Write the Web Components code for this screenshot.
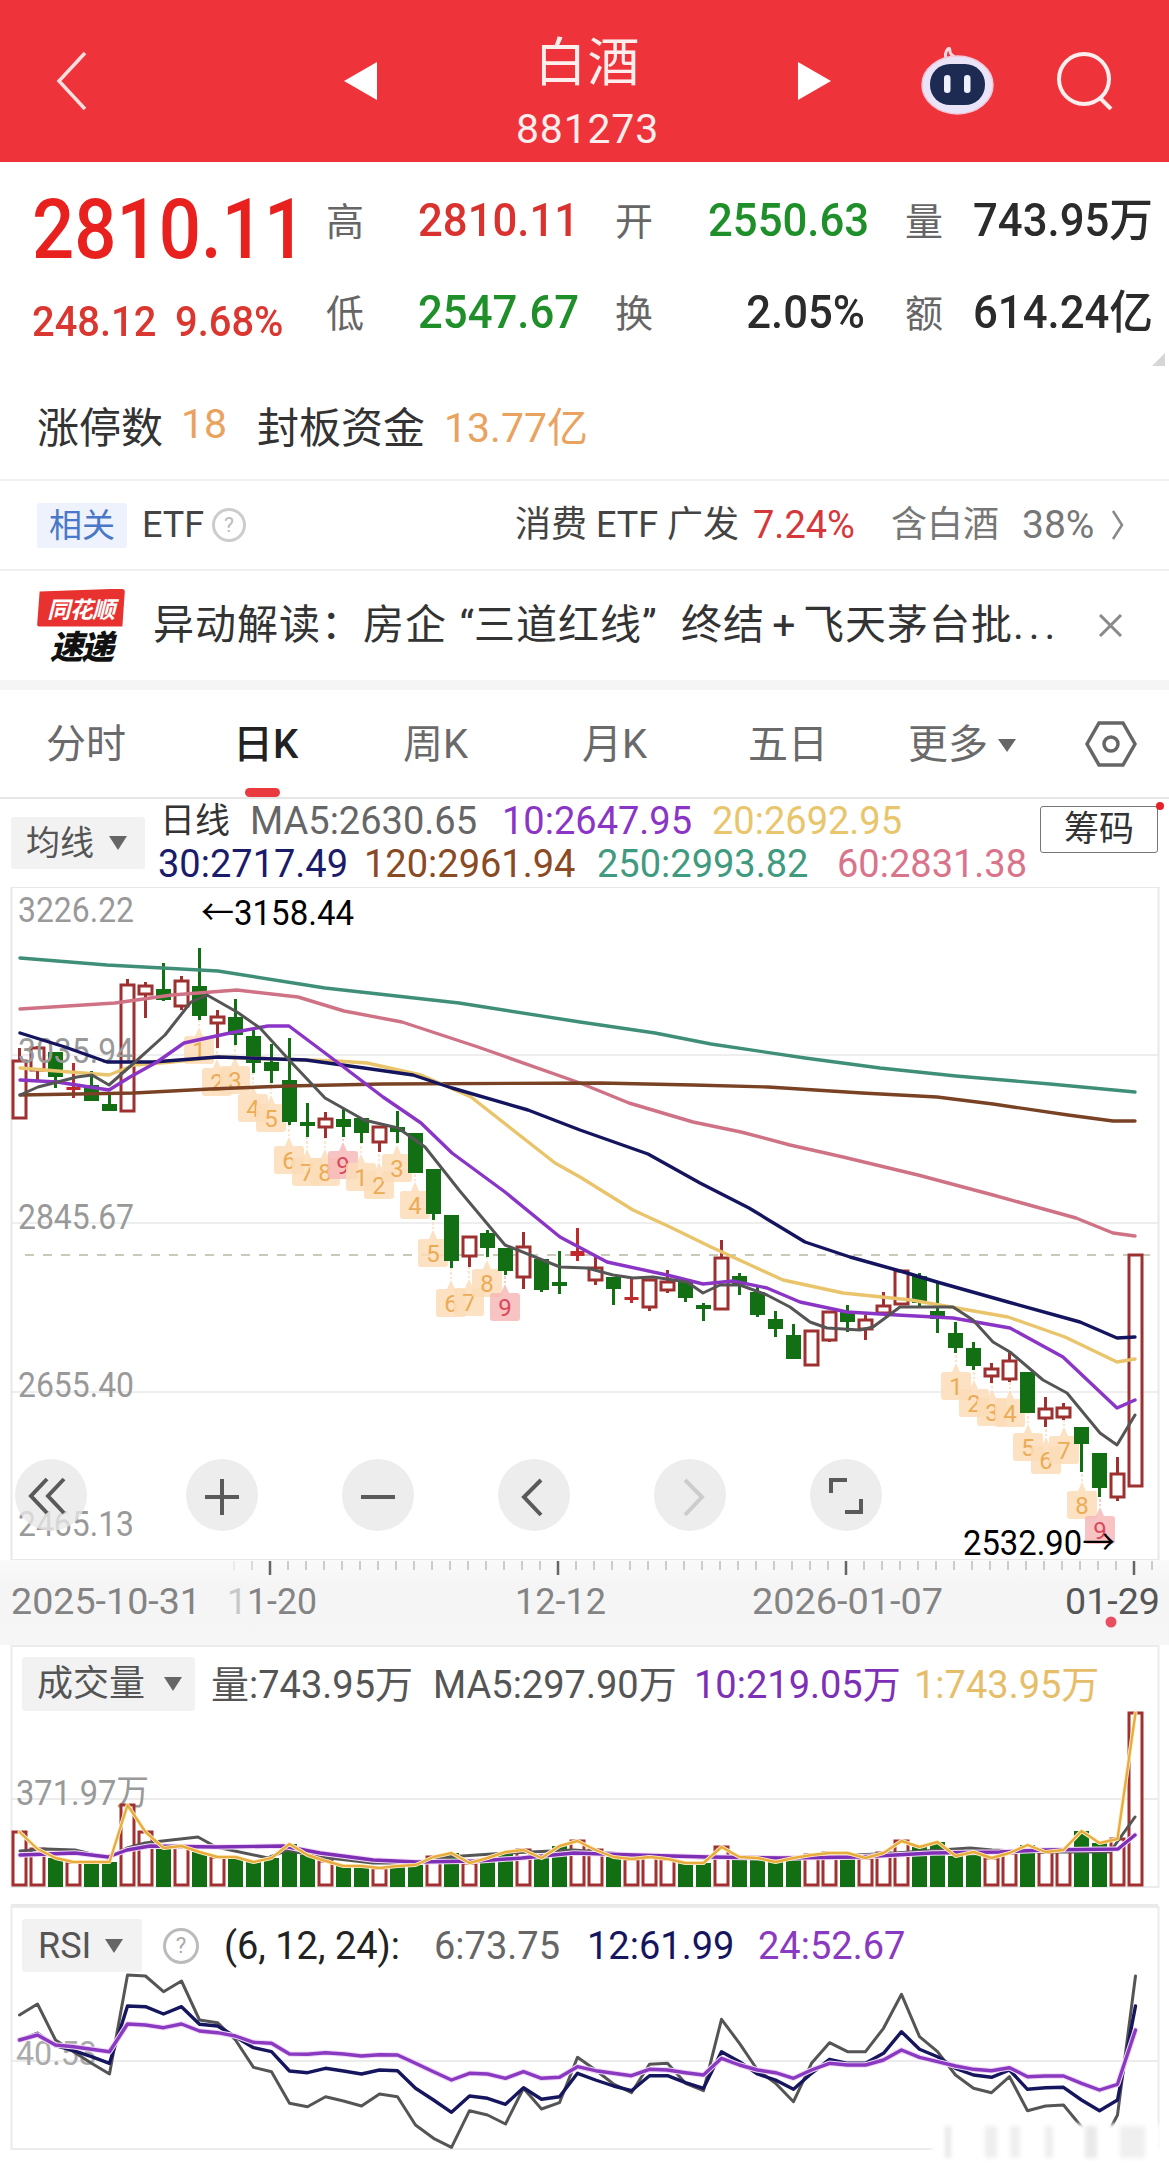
<!DOCTYPE html>
<html lang="zh"><head><meta charset="utf-8"><title>白酒</title>
<style>
html,body{margin:0;padding:0;background:#fff}
body{width:1169px;height:2172px;overflow:hidden;display:flex;flex-direction:column;font-family:Roboto,"Noto Sans CJK SC",sans-serif}
</style></head>
<body>
<x-header></x-header>
<x-quote></x-quote>
<x-etf></x-etf>
<x-news></x-news>
<x-tabs></x-tabs>
<x-legend></x-legend>
<x-kline></x-kline>
<x-axis></x-axis>
<x-volume></x-volume>
<x-rsi></x-rsi>
<script>
const FONT='Roboto,"Noto Sans CJK SC",sans-serif';
function def(name,html,init){
  customElements.define(name,class extends HTMLElement{
    constructor(){super();this.attachShadow({mode:'open'}).innerHTML=typeof html==='function'?html(this):html;}
    connectedCallback(){if(init)init(this);}
  });
}
const X=i=>19.5+18*i;
const line=(pts,c,w=3.4,extra='')=>`<polyline points="${pts.map(p=>p.join(',')).join(' ')}" fill="none" stroke="${c}" stroke-width="${w}" stroke-linejoin="round" stroke-linecap="round" ${extra}/>`;
const T=(s,x,y,len,fs,c,w=400)=>`<text x="${x}" y="${y}" textLength="${len}" lengthAdjust="spacingAndGlyphs" font-size="${fs}" fill="${c}" font-weight="${w}" font-family='${FONT}'>${s}</text>`;

def('x-select',`<style>
:host{display:inline-flex;align-items:center;background:#f2f2f2;border-radius:3px;box-sizing:border-box;color:#555;font:400 var(--fs,35px)/1 ${FONT};gap:var(--g,17px);padding-left:var(--p,15px)}
i{display:block;width:0;height:0;border-left:9px solid transparent;border-right:9px solid transparent;border-top:14px solid #666}
</style><slot></slot><i></i>`);

def('x-help',`<style>:host{display:inline-flex;align-items:center;justify-content:center;box-sizing:border-box;width:var(--s,34px);height:var(--s,34px);border:3px solid #ccc;border-radius:50%;color:#bbb;font:400 calc(var(--s,34px)*.62)/1 ${FONT}}</style>?`);

def('x-chart-btn',`<style>:host{display:block;flex:none;width:72px;height:72px;border-radius:50%;background:rgba(232,232,232,.78)}svg{display:block}</style>
<svg width="72" height="72" viewBox="0 0 72 72" fill="none" stroke="var(--c,#5a5a5a)" stroke-width="4"><path d=""/></svg>`,
el=>{el.shadowRoot.querySelector('path').setAttribute('d',el.getAttribute('d'))});

def('x-header',`<style>
:host{display:grid;flex:none;height:162px;background:#ee343a;box-sizing:border-box;padding-left:56px;grid-template-columns:288px 33px 421px 33px 90px 73px 63px 56px;align-items:center;color:#fdeeee;font-family:${FONT}}
svg{display:block}
.c{display:flex;flex-direction:column;align-items:center;justify-content:flex-start;height:162px;padding-top:36px;box-sizing:border-box}
.t{font-size:52px;line-height:56px;font-weight:400;letter-spacing:1px}
.n{font-size:41px;line-height:40px;margin-top:17px;font-weight:400;letter-spacing:.8px}
</style>
<svg width="32" height="60" viewBox="0 0 32 60"><path d="M29 2 3 30l26 28" fill="none" stroke="#fbdede" stroke-width="3.5"/></svg>
<svg width="33" height="38" viewBox="0 0 33 38"><path d="M33 0V38L0 19Z" fill="#fff"/></svg>
<div class="c"><div class="t">白酒</div><div class="n">881273</div></div>
<svg width="33" height="38" viewBox="0 0 33 38"><path d="M0 0V38L33 19Z" fill="#fff"/></svg>
<span></span>
<svg width="73" height="68" viewBox="0 0 73 68"><path d="M27 14c-4-3-3-10 1-13 2 2 0 4 2 6 2 2 6 4 6 8" fill="none" stroke="#f8d9e2" stroke-width="3"/><ellipse cx="36.500" cy="38" rx="35.500" ry="29" fill="#e9e4f8" stroke="#f3c6d8" stroke-width="1.500"/><rect x="9" y="17" width="55" height="41" rx="20" fill="#1d2a52"/><rect x="23" y="28" width="6.500" height="18" rx="3.200" fill="#eef1ff"/><rect x="43" y="28" width="6.500" height="18" rx="3.200" fill="#eef1ff"/></svg>
<span></span>
<svg width="56" height="58" viewBox="0 0 56 58"><circle cx="27" cy="27" r="25" fill="none" stroke="#fdeeee" stroke-width="4"/><path d="M42 45 54 57" stroke="#fdeeee" stroke-width="4"/></svg>`);

def('x-quote',`<style>
:host{display:flex;flex-direction:column;flex:none;height:319px;box-sizing:border-box;border-bottom:2px solid #f0f0f0;position:relative;font-family:${FONT}}
.top{display:flex;height:230px;flex:none;padding-left:32px}
.l{width:294px;flex:none;color:#e32b2b}
.big{font-size:84px;font-weight:500;line-height:70px;margin-top:33px;color:#e8211f;transform:scaleX(.885);transform-origin:left;white-space:nowrap}
.sub{font-size:42px;font-weight:500;line-height:44px;margin-top:35px;color:#d9372f;display:flex;white-space:nowrap}
.sub span{display:block;transform:scaleX(.95);transform-origin:left}
.sub span:first-child{width:143px}
.g{display:grid;grid-template-columns:92px 197px 93px 157px 40px 68px 1fr;grid-auto-rows:46px;row-gap:46px;padding-top:35px;align-items:center;white-space:nowrap}
.k{font-size:38px;font-weight:400;color:#666;margin-bottom:3px}
.v{font-size:46px;font-weight:500;transform:scaleX(.95);transform-origin:left;color:#2b2b2b;line-height:46px}
.r{color:#d9322f}.gr{color:#1f8f2a}.right{text-align:right;transform-origin:right}
.row{display:flex;align-items:center;height:50px;margin-top:7px;padding-left:37px;font-size:42px;color:#333;font-weight:400;white-space:nowrap}
.o{color:#e9a35f;font-size:41px}
.tri{position:absolute;left:1152px;top:191px;width:0;height:0;border-left:13px solid transparent;border-bottom:13px solid #d6d6d6}
</style>
<div class="top"><div class="l"><div class="big">2810.11</div><div class="sub"><span>248.12</span><span>9.68%</span></div></div>
<div class="g">
<span class="k">高</span><span class="v r">2810.11</span><span class="k">开</span><span class="v gr">2550.63</span><span></span><span class="k">量</span><span class="v">743.95万</span>
<span class="k">低</span><span class="v gr">2547.67</span><span class="k">换</span><span class="v right">2.05%</span><span></span><span class="k">额</span><span class="v">614.24亿</span>
</div></div>
<div class="row"><span>涨停数</span><span class="o" style="margin-left:18px;width:43px">18</span><span style="margin-left:33px">封板资金</span><span class="o" style="margin-left:19px">13.77亿</span></div>
<div class="tri"></div>`);

def('x-etf',`<style>
:host{display:flex;flex:none;height:90px;box-sizing:border-box;border-bottom:2px solid #f0f0f0;align-items:center;padding-left:37px;font:400 36px/1 ${FONT};color:#444;white-space:nowrap}
.tag{width:90px;height:45px;background:#edf2fc;border-radius:3px;color:#4a78c8;display:flex;align-items:center;justify-content:center;font-size:33px;font-weight:400}
.e{margin-left:15px;width:70px}
.m{margin-left:269px;display:flex;align-items:center;width:238px;font-weight:400;font-size:36px}
.p{color:#d6373a;width:138px;font-size:38px}
.g{color:#777;font-size:36px;font-weight:400}
svg{margin-left:15px}
</style>
<span class="tag">相关</span><span class="e">ETF</span><x-help></x-help>
<span class="m">消费 ETF 广发</span><span class="p">7.24%</span><span class="g" style="width:131px">含白酒</span><span class="g" style="width:74px;font-size:39px">38%</span>
<svg width="13" height="32" viewBox="0 0 13 32"><path d="M2 2 11 16 2 30" fill="none" stroke="#888" stroke-width="2.500"/></svg>`);

def('x-news',`<style>
:host{display:flex;flex:none;height:119px;box-sizing:border-box;border-bottom:10px solid #f5f5f5;align-items:center;padding-left:37px;white-space:nowrap;color:#333;font:400 41px/1 ${FONT}}
.logo{width:88px;height:74px;flex:none;display:flex;flex-direction:column;align-items:center}
.a{width:88px;height:38px;background:#e8322f;color:#fff;font:italic 700 23px/38px "Noto Sans CJK SC",sans-serif;text-align:center;border-radius:3px;clip-path:polygon(3% 8%,100% 0,97% 100%,0 100%);letter-spacing:-.5px}
.b{font:italic 900 33px/36px "Noto Sans CJK SC",sans-serif;color:#111;letter-spacing:-2px}
.t{margin-left:28px;width:915px;flex:none;letter-spacing:1px}
.t span{display:inline-block;text-align:center;letter-spacing:0}
svg{margin-left:30px}
</style>
<div class="logo"><div class="a">同花顺</div><div class="b">速递</div></div>
<div class="t">异动解读：房企<span style="width:27px;text-align:right">“</span>三道红线<span style="width:39px;text-align:left">”</span>终结<span style="width:38px">+</span>飞天茅台批<span style="letter-spacing:5px;width:45px">...</span></div>
<svg width="25" height="23" viewBox="0 0 25 23"><path d="M2 1 23 22M23 1 2 22" stroke="#8a8a8a" stroke-width="3"/></svg>`);

def('x-tabs',`<style>
:host{display:grid;flex:none;height:109px;box-sizing:border-box;border-bottom:2px solid #e6e6e6;grid-template-columns:187px 170px 179px 166px 160px 177px 60px;padding-left:46px;align-items:center;font:400 40px/1 ${FONT};color:#6a6a6a;position:relative;white-space:nowrap}
b{color:#222;font-weight:500}
span{padding-top:3px}
i{position:absolute;left:245px;top:98px;width:35px;height:9px;border-radius:5px;background:#e93b3f}
.m{display:flex;align-items:center;gap:10px}
.m u{display:block;width:0;height:0;border-left:9px solid transparent;border-right:9px solid transparent;border-top:13px solid #666}
</style>
<span>分时</span><span><b>日K</b></span><span>周K</span><span>月K</span><span>五日</span><span class="m">更多<u></u></span>
<svg width="52" height="46" viewBox="0 0 52 46"><path d="M14 2H38L50 23 38 44H14L2 23Z" fill="none" stroke="#666" stroke-width="3.500"/><circle cx="26" cy="23" r="7" fill="none" stroke="#666" stroke-width="3.500"/></svg><i></i>`);

def('x-legend',`<style>
:host{display:flex;flex:none;height:88px;box-sizing:border-box;padding:1px 11px 0;position:relative;font:400 38px/43px ${FONT};white-space:nowrap;color:#666}
x-select{width:134px;height:52px;margin-top:17px;flex:none;--fs:34px;--g:15px}
.c{margin-left:13px;width:882px;flex:none}
.row{display:flex;height:43px}.row span{display:block;flex:none}
.bx{box-sizing:border-box;width:118px;height:47px;margin-top:6px;border:1.500px solid #777;border-radius:3px;display:flex;align-items:center;justify-content:center;font-size:35px;font-weight:400;color:#333;line-height:1;flex:none;margin-left:0}
.dot{position:absolute;left:1156px;top:3px;width:8px;height:8px;border-radius:50%;background:#e8202a}
</style>
<x-select>均线</x-select>
<div class="c">
<div class="row"><span style="width:90px;margin-left:2px;color:#333;font-size:35px;font-weight:400">日线</span><span style="width:252px">MA5:2630.65</span><span style="width:210px;color:#8a35c5">10:2647.95</span><span style="color:#e9c56c">20:2692.95</span></div>
<div class="row"><span style="width:206px;color:#1b1b6b">30:2717.49</span><span style="width:233px;color:#8a4a24">120:2961.94</span><span style="width:240px;color:#3f9a80">250:2993.82</span><span style="color:#d9748a">60:2831.38</span></div>
</div>
<div class="bx">筹码</div><i class="dot"></i>`);

const candles=[
['r',1048,1118,1061,1118],['r',1046,1080,1048,1070],['g',1052,1088,1052,1077],['f',1063,1098,1087,1090],['g',1071,1101,1085,1101],['g',1093,1111,1104,1111],['r',979,1112,985,1111],['r',982,1018,986,994],['g',963,1001,989,1000],['r',976,1010,981,1006],
['g',948,1020,986,1016],['r',1010,1048,1017,1023],['g',999,1045,1017,1035],['g',1030,1073,1036,1063],['g',1044,1083,1062,1071],['g',1038,1125,1080,1122],['g',1103,1137,1122,1126],['r',1112,1138,1119,1127],['g',1109,1137,1119,1127],['g',1118,1143,1118,1133],
['r',1127,1152,1127,1142],['g',1111,1143,1127,1132],['g',1133,1173,1133,1173],['g',1169,1220,1169,1214],['g',1215,1268,1215,1261],['r',1237,1267,1237,1256],['g',1230,1257,1233,1248],['g',1248,1275,1248,1271],['r',1232,1289,1247,1277],['g',1259,1292,1259,1290],
['g',1251,1294,1282,1286],['f',1228,1261,1251,1256],['r',1257,1285,1268,1280],['g',1277,1305,1277,1289],['f',1279,1303,1297,1300],['r',1280,1311,1280,1307],['r',1270,1293,1282,1290],['g',1281,1302,1281,1298],['g',1303,1321,1305,1309],['r',1240,1309,1258,1309],
['g',1273,1295,1276,1285],['g',1285,1317,1292,1315],['g',1311,1337,1319,1329],['g',1324,1359,1335,1359],['r',1331,1365,1331,1365],['r',1312,1342,1312,1340],['g',1305,1332,1312,1322],['r',1315,1340,1320,1329],['r',1292,1315,1306,1313],['r',1271,1304,1271,1304],
['g',1273,1308,1276,1303],['g',1283,1333,1311,1319],['g',1322,1353,1333,1348],['g',1342,1370,1348,1366],['r',1363,1383,1369,1376],['r',1352,1382,1361,1379],['g',1372,1413,1372,1413],['r',1397,1427,1409,1418],['r',1403,1420,1408,1417],['g',1427,1472,1427,1444],
['g',1453,1497,1453,1488],['r',1457,1501,1474,1497],['r',1255,1487,1255,1486]];
const tags=[[199,1050,1],[217,1082,2],[235,1080,3],[253,1108,4],[271,1118,5],[289,1160,6],[307,1172,7],[325,1172,8],[343,1165,9,1],[361,1177,1],[379,1185,2],[397,1168,3],[415,1205,4],[433,1253,5],[451,1303,6],[469,1302,7],[487,1283,8],[505,1307,9,1],[956,1386,1],[974,1403,2],[992,1412,3],[1010,1413,4],[1028,1447,5],[1046,1460,6],[1064,1450,7],[1082,1505,8],[1100,1530,9,1]];
const MA={
g250:[[20,958],[107,965],[218,971],[325,988],[459,1003],[580,1022],[655,1033],[711,1044],[805,1058],[880,1068],[956,1076],[1050,1084],[1135,1092]],
p60:[[20,1009],[115,1003],[172,995],[237,990],[298,997],[344,1011],[402,1022],[478,1047],[580,1083],[629,1103],[693,1122],[741,1132],[790,1145],[843,1157],[918,1175],[993,1195],[1076,1218],[1113,1233],[1135,1236]],
b120:[[20,1095],[134,1093],[210,1089],[287,1086],[383,1084],[600,1083],[693,1085],[768,1087],[862,1093],[937,1097],[993,1104],[1068,1115],[1113,1121],[1135,1121]],
y20:[[20,1068],[57,1071],[109,1075],[134,1065],[172,1062],[218,1057],[337,1061],[367,1063],[421,1075],[471,1097],[555,1163],[580,1177],[633,1210],[670,1227],[711,1247],[783,1280],[843,1293],[911,1300],[1008,1317],[1065,1337],[1117,1362],[1135,1359]],
n30:[[20,1033],[65,1047],[107,1062],[153,1062],[218,1057],[306,1060],[364,1068],[413,1075],[452,1088],[528,1110],[580,1130],[648,1154],[700,1183],[749,1208],[805,1242],[850,1257],[907,1273],[937,1282],[1008,1302],[1080,1322],[1117,1338],[1135,1337]],
v10:[[20,1080],[57,1082],[109,1090],[130,1077],[157,1062],[184,1043],[230,1033],[268,1026],[289,1026],[337,1062],[383,1097],[421,1123],[452,1153],[505,1192],[560,1237],[607,1262],[667,1275],[703,1284],[733,1281],[767,1288],[800,1302],[847,1312],[897,1315],[953,1318],[1010,1328],[1063,1357],[1117,1408],[1135,1400]],
k5:[[20,1095],[38,1087],[77,1077],[92,1075],[109,1085],[134,1063],[165,1035],[191,1002],[207,995],[237,1012],[260,1028],[291,1062],[325,1098],[364,1120],[398,1128],[425,1147],[459,1190],[505,1245],[560,1267],[587,1268],[613,1275],[633,1278],[653,1277],[687,1282],[703,1293],[720,1285],[740,1285],[767,1295],[790,1307],[810,1322],[827,1328],[860,1330],[873,1327],[900,1307],[953,1307],[973,1320],[993,1342],[1010,1352],[1043,1380],[1067,1393],[1100,1433],[1117,1445],[1135,1415]]};

def('x-kline',()=>{
let s='';
s+=`<rect x="11.500" y="887" width="1147" height="673" fill="none" stroke="#e8e8e8" stroke-width="2"/>`;
[1055,1223,1392].forEach(y=>s+=`<path d="M12 ${y}H1158" stroke="#e9e9e9" stroke-width="1.500"/>`);
s+=`<path d="M25 1255H1156" stroke="#b9b9a6" stroke-width="1.500" stroke-dasharray="9 9"/>`;
tags.forEach(([x,y,n,p])=>{const f=p?'#f7b9b9':'#fbdcb8';
 s+=`<path d="M${x} ${y-36}V${y-24}" stroke="${f}" stroke-width="1.500" stroke-dasharray="3 2"/><path d="M${x-15} ${y-11}q0-3 3-3h8l4-9 4 9h8q3 0 3 3v22q0 3-3 3h-24q-3 0-3-3z" fill="${f}" opacity=".85"/>`;
 s+=`<text x="${x}" y="${y+9}" text-anchor="middle" font-size="24" fill="${p?'#d9485a':'#ecab55'}" font-family='${FONT}'>${n}</text>`;});
candles.forEach(([c,h,l,t,b],i)=>{const x=X(i);
 const col=c==='g'?'#126f14':c==='f'?'#c02a2a':'#9e3030';
 s+=`<path d="M${x} ${h}V${l}" stroke="${col}" stroke-width="3"/>`;
 if(c==='g')s+=`<rect x="${x-7.5}" y="${t}" width="15" height="${b-t}" fill="${col}"/>`;
 else if(c==='f')s+=`<rect x="${x-7}" y="${t}" width="14" height="${b-t}" fill="${col}"/>`;
 else s+=`<rect x="${x-6.5}" y="${t}" width="13" height="${b-t}" fill="#fff" stroke="${col}" stroke-width="3"/>`;});
[['3226.22',922],['3035.94',1063],['2845.67',1229],['2655.40',1397],['2465.13',1536]].forEach(([t,y])=>s+=T(t,18,y,116,35,'#999'));
s+=line(MA.g250,'#3f8f78')+line(MA.p60,'#cf7285')+line(MA.b120,'#7a4224')+line(MA.y20,'#e9c46a')+line(MA.n30,'#14145f')+line(MA.v10,'#8a35c5')+line(MA.k5,'#555',3);
s+=T('←3158.44',201,925,153,35,'#000')+T('2532.90→',963,1555,152,35,'#000');
return `<style>:host{display:block;flex:none;height:673px;position:relative}svg{display:block}
.b{position:absolute;left:15px;top:572px;display:flex;gap:84px}
.b x-chart-btn:first-child{margin-right:15px}</style>
<svg width="1169" height="673" viewBox="0 887 1169 673">${s}</svg>
<div class="b"><x-chart-btn d="M32 20 16 37l16 17M49 20 33 37l16 17"></x-chart-btn><x-chart-btn d="M36 20V56M19 38H53"></x-chart-btn><x-chart-btn d="M19 38H53"></x-chart-btn><x-chart-btn d="M43 21 26 38l17 18"></x-chart-btn><x-chart-btn d="M31 21 48 38 31 56" style="--c:#ccc"></x-chart-btn><x-chart-btn d="M21 34V21H37M51 40V53H35"></x-chart-btn></div>`;});

def('x-axis',()=>{
let s='';
for(let k=0;k<52;k++){const x=234+18*k;const maj=(k-2)%16===0;const o=Math.min(1,(k+1)/3);
 s+=`<path d="M${x} 1561V${maj?1575:1570}" stroke="${maj?'#666':'#bdbdbd'}" stroke-width="${maj?2.5:1.5}" opacity="${o}"/>`;}
s+=T('2025-10-31',11,1614,190,36,'#848484')+T('<tspan fill="#c8c8c8">1</tspan>1-20',227,1614,90,36,'#848484')+T('12-12',515,1614,91,36,'#848484')+T('2026-01-07',752,1614,191,36,'#848484')+T('01-29',1065,1614,95,36,'#555');
s+=`<circle cx="1111" cy="1622" r="5.500" fill="#e8505f"/>`;
return `<style>:host{display:block;flex:none;height:85px;background:linear-gradient(#fafafa,#f5f5f5 30%,#f6f6f6)}svg{display:block}</style><svg width="1169" height="85" viewBox="0 1560 1169 85">${s}</svg>`;});

const volTop=[1832,1849,1858,1862,1862,1862,1805,1832,1848,1846,1852,1857,1857,1862,1858,1844,1855,1861,1866,1866,1868,1866,1865,1857,1853,1863,1858,1852,1850,1858,1846,1841,1850,1857,1859,1857,1859,1863,1863,1847,1857,1858,1862,1858,1855,1853,1853,1858,1853,1841,1847,1842,1856,1852,1858,1853,1845,1852,1850,1831,1843,1839,1713];
const redV=new Set([0,1,3,6,7,9,11,17,20,23,25,28,31,32,34,35,36,39,44,45,47,48,49,54,55,57,58,61,62]);

def('x-volume',()=>{
const k=[[20,1851],[45,1849],[75,1850],[108,1858],[127,1848],[145,1843],[198,1837],[216,1847],[268,1858],[287,1850],[320,1857],[373,1863],[417,1863],[447,1857],[507,1853],[574,1850],[634,1855],[708,1858],[746,1857],[783,1860],[820,1857],[895,1853],[970,1848],[992,1850],[1044,1852],[1110,1852],[1135,1817]];
const v=[[20,1855],[75,1853],[108,1857],[127,1850],[150,1846],[216,1847],[283,1846],[320,1853],[373,1860],[417,1862],[477,1861],[522,1858],[574,1853],[634,1855],[708,1857],[783,1858],[858,1857],[932,1853],[1000,1852],[1044,1850],[1118,1849],[1135,1835]];
let s=`<rect x="11.500" y="1646" width="1147" height="241" fill="none" stroke="#ececec" stroke-width="2"/><path d="M12 1799H1158" stroke="#e6e6e6" stroke-width="1.500"/>`;
s+=T('371.97万',16,1805,133,35,'#999',400);
volTop.forEach((t,i)=>{const x=X(i);
 s+=redV.has(i)?`<rect x="${x-6.5}" y="${t}" width="13" height="${1885-t}" fill="#fff" stroke="#a23030" stroke-width="3"/>`:`<rect x="${x-7.5}" y="${t}" width="15" height="${1887-t}" fill="#136f13"/>`;});
s+=line(k,'#555',3)+line(v,'#f4dcf8',5.5)+line(v,'#7d2fb5',3.4);
const y=volTop.map((t,i)=>[X(i),t]);
s+=line(y,'#fff2cf',4)+line(y,'#e8ac3e',2.4);
return `<style>:host{display:block;flex:none;height:261px;position:relative;font:400 38px/1 ${FONT};white-space:nowrap}svg{display:block}
.h{position:absolute;left:22px;top:12px;display:flex;align-items:center}
x-select{width:173px;height:54px;--fs:36px;--g:19px}
.h span{flex:none;display:block;padding-top:2px}
</style><svg width="1169" height="261" viewBox="0 1645 1169 261">${s}<path d="M11 1905H1158" stroke="#e9e9e9" stroke-width="2"/></svg>
<div class="h"><x-select>成交量</x-select><span style="width:222px;margin-left:16px;color:#555">量:743.95万</span><span style="width:261px;color:#555">MA5:297.90万</span><span style="width:220px;color:#7d2fb5">10:219.05万</span><span style="color:#e6be6a">1:743.95万</span></div>`;});

const r6=[345,312,420,455,490,522,225,228,275,243,360,368,420,502,515,610,620,590,603,618,582,590,675,715,742,632,645,672,565,627,608,472,510,552,578,493,490,550,572,358,430,510,550,605,490,428,455,455,385,283,410,455,525,565,578,530,632,618,615,680,748,645,228];
const r12=[420,400,437,452,470,490,318,320,342,320,373,378,410,443,455,513,518,505,513,522,510,512,565,600,637,588,595,613,563,598,590,520,540,558,572,527,527,548,565,455,485,522,540,568,520,478,490,490,460,395,448,470,505,525,532,510,568,563,562,600,632,600,318];
const r24=[420,405,435,440,448,455,372,375,383,372,393,398,408,427,430,462,463,458,462,468,464,465,490,515,540,520,522,535,515,535,532,500,512,520,527,508,510,518,525,475,495,510,518,535,510,490,495,495,480,450,472,485,498,508,512,503,530,528,528,550,570,553,390];

def('x-rsi',()=>{
const P=a=>a.map((v,i)=>[X(i),+(1900+v/3).toFixed(1)]);
let s=`<rect x="11.500" y="1907" width="1147" height="242" fill="none" stroke="#ececec" stroke-width="2"/><path d="M12 2061H1158" stroke="#e6e6e6" stroke-width="1.500"/>`;
s+=T('40.53',16,2065,81,34,'#aaa');
s+=line(P(r6),'#555',3)+line(P(r12),'#16165f',3.4)+line(P(r24),'#f0d8f6',5.5)+line(P(r24),'#8a3ac0',3.4);
s+=`<defs><filter id="bl"><feGaussianBlur stdDeviation="2"/></filter></defs><g filter="url(#bl)"><rect x="932" y="2124" width="228" height="36" fill="#fff"/>`;
[[945,6,'#e8e8e8'],[985,12,'#eeeeee'],[1010,10,'#efefef'],[1045,8,'#eeeeee'],[1085,12,'#e9e9e9'],[1120,25,'#efefef']].forEach(([x,w,c])=>s+=`<rect x="${x}" y="2126" width="${w}" height="32" fill="${c}"/>`);
s+=`</g>`;
return `<style>:host{display:block;flex:none;height:266px;position:relative;font:400 38px/1 ${FONT};white-space:nowrap}svg{display:block}
.h{position:absolute;left:22px;top:13px;display:flex;align-items:center}
x-select{width:120px;height:53px;--fs:36px;--g:14px;--p:16px}
x-help{--s:36px;margin-left:21px;margin-right:25px;flex:none;color:#aaa;border-color:#bbb}
.h span{display:block;flex:none}
</style><svg width="1169" height="266" viewBox="0 1906 1169 266">${s}</svg>
<div class="h"><x-select>RSI</x-select><x-help></x-help><span style="width:210px;color:#222">(6, 12, 24):</span><span style="width:153px;color:#666">6:73.75</span><span style="width:171px;color:#16165f">12:61.99</span><span style="color:#8a3ac0">24:52.67</span></div>`;});
</script>
</body></html>
